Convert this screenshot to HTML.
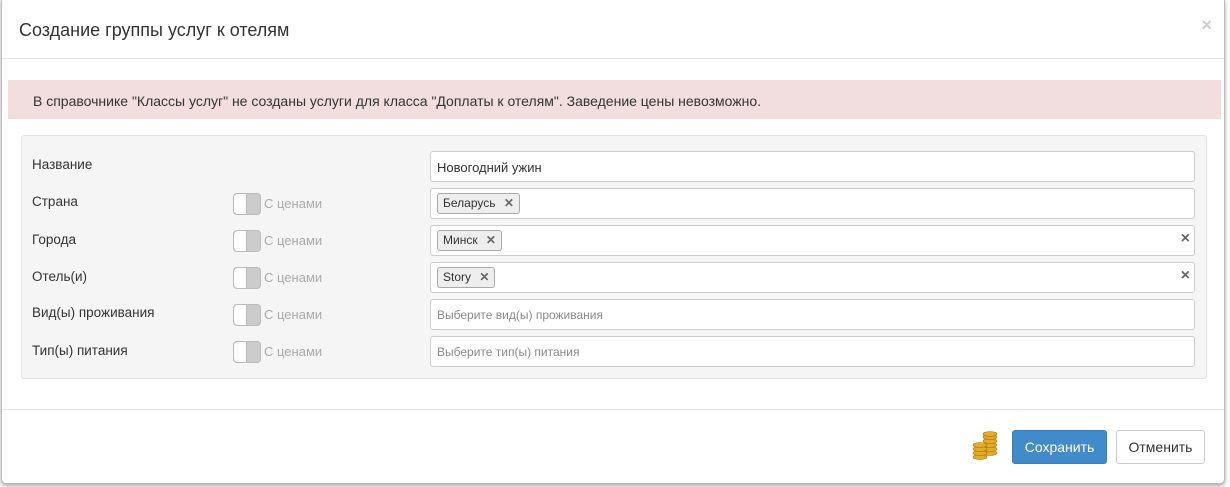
<!DOCTYPE html><html><head><meta charset="utf-8"><style>
body{margin:0;width:1230px;height:487px;background:#fff;font-family:"Liberation Sans",sans-serif;font-size:13px;color:#333;position:relative;overflow:hidden}
.modal{position:absolute;left:1px;top:-1px;width:1222px;height:483px;border:1px solid #bbb;border-radius:0 0 5px 5px;box-shadow:0 2px 4px rgba(0,0,0,.35);background:#fff}
.abs{position:absolute}
.inp{position:absolute;left:428px;width:763px;height:29px;border:1px solid #ccc;border-radius:3px;background:#fff}
.lbl{position:absolute;left:30px;font-size:13.5px}
.tg{position:absolute;left:231px;width:26px;height:20px;border:1px solid #bbb;border-radius:4px;background:#ccc}
.tg:before{content:"";position:absolute;left:0;top:0;width:12px;height:20px;background:#fff;border-radius:4px 0 0 4px;border-right:1px solid #bbb}
.tl{position:absolute;left:262px;color:#aaa}
.tag{position:absolute;left:6px;top:4px;height:19px;line-height:19px;padding:0 5px;border:1px solid #aaa;border-radius:3px;background:#eee;font-size:12px}
.tag b{color:#666;margin-left:5px}
.ph{position:absolute;left:6px;top:8px;color:#888;font-size:12px}
.clr{position:absolute;right:4px;top:4px;color:#666;font-weight:bold;font-size:16px}
</style></head><body><div class="modal">
<div class="abs" style="left:17px;top:20px;font-size:18px;color:#333">Создание группы услуг к отелям</div>
<div class="abs" style="right:12px;top:15px;font-size:18px;color:#ccc;font-weight:bold">×</div>
<div class="abs" style="left:0;top:58px;width:1222px;border-top:1px solid #e5e5e5"></div>
<div class="abs" style="left:6px;top:80px;width:1213px;height:39px;background:#f2dede"></div>
<div class="abs" style="left:31px;top:93px;color:#333;font-size:14px">В справочнике "Классы услуг" не созданы услуги для класса "Доплаты к отелям". Заведение цены невозможно.</div>
<div class="abs" style="left:19px;top:135px;width:1184px;height:242px;background:#f5f5f5;border:1px solid #e3e3e3;border-radius:3px"></div>
<div class="lbl" style="top:157px">Название</div>
<div class="inp" style="top:151px"><span class="abs" style="left:6px;top:8px">Новогодний ужин</span></div>
<div class="lbl" style="top:194px">Страна</div><div class="tg" style="top:193px"></div><div class="tl" style="top:196px">С ценами</div>
<div class="inp" style="top:188px"><span class="tag">Беларусь <b>✕</b></span></div>
<div class="lbl" style="top:232px">Города</div><div class="tg" style="top:230px"></div><div class="tl" style="top:233px">С ценами</div>
<div class="inp" style="top:225px"><span class="tag">Минск <b>✕</b></span><span class="clr">×</span></div>
<div class="lbl" style="top:269px">Отель(и)</div><div class="tg" style="top:267px"></div><div class="tl" style="top:270px">С ценами</div>
<div class="inp" style="top:262px"><span class="tag">Story <b>✕</b></span><span class="clr">×</span></div>
<div class="lbl" style="top:305px">Вид(ы) проживания</div><div class="tg" style="top:304px"></div><div class="tl" style="top:307px">С ценами</div>
<div class="inp" style="top:299px"><span class="ph">Выберите вид(ы) проживания</span></div>
<div class="lbl" style="top:343px">Тип(ы) питания</div><div class="tg" style="top:341px"></div><div class="tl" style="top:344px">С ценами</div>
<div class="inp" style="top:336px"><span class="ph">Выберите тип(ы) питания</span></div>
<div class="abs" style="left:0;top:409px;width:1222px;border-top:1px solid #e5e5e5"></div>
<svg class="abs" style="left:968px;top:431px" width="32" height="30"><g fill="#e3ac24" stroke="#a87010" stroke-width=".6">
<ellipse cx="20" cy="22" rx="7" ry="2.5"/><ellipse cx="20" cy="18" rx="7" ry="2.5"/><ellipse cx="20" cy="14" rx="7" ry="2.5"/><ellipse cx="20" cy="10" rx="7" ry="2.5"/><ellipse cx="20" cy="6" rx="7" ry="2.5"/><ellipse cx="20" cy="3" rx="7" ry="2.5"/>
<ellipse cx="10" cy="26" rx="7" ry="2.5"/><ellipse cx="10" cy="22" rx="7" ry="2.5"/><ellipse cx="10" cy="18" rx="7" ry="2.5"/><ellipse cx="10" cy="14" rx="7" ry="2.5"/></g></svg>
<div class="abs" style="left:1010px;top:430px;width:93px;height:32px;background:#428bca;border:1px solid #357ebd;border-radius:3px;color:#fff;font-size:14px;line-height:32px;text-align:center">Сохранить</div>
<div class="abs" style="left:1114px;top:430px;width:87px;height:32px;background:#fff;border:1px solid #ccc;border-radius:3px;color:#333;font-size:14px;line-height:32px;text-align:center">Отменить</div>
</div></body></html>
